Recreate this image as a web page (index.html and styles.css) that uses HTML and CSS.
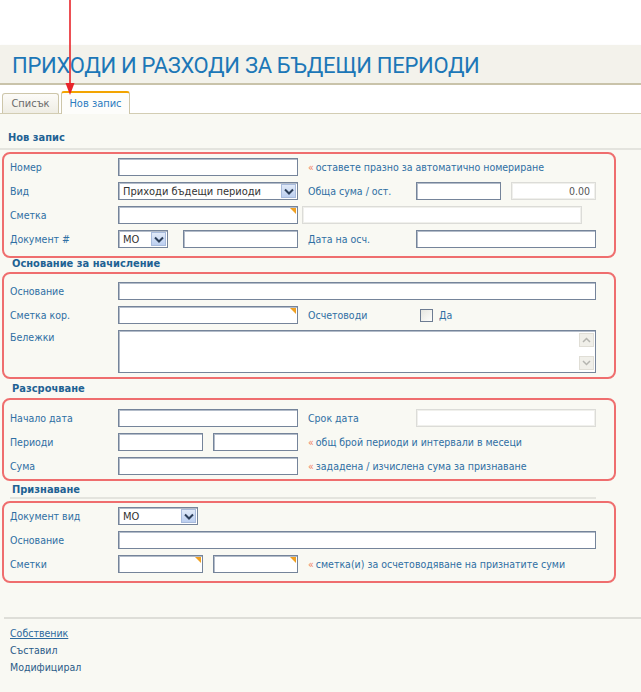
FILE: index.html
```html
<!DOCTYPE html>
<html lang="bg">
<head>
<meta charset="utf-8">
<title>Приходи и разходи за бъдещи периоди</title>
<link rel="stylesheet" href="styles.css">
</head>
<body>
<div class="page">
  <div class="topspace"></div>
  <header class="titlebar"><h1>ПРИХОДИ И РАЗХОДИ ЗА БЪДЕЩИ ПЕРИОДИ</h1></header>
  <nav class="tabs">
    <a class="tab">Списък</a>
    <a class="tab tab-active">Нов запис</a>
  </nav>
  <main class="content">
    <h2 class="sec sec-first">Нов запис</h2>
    <div class="box box-1">
      <div class="grid">
        <span class="lbl c1">Номер</span>
        <div class="inp c2"></div>
        <div class="hint c4-8"><span class="raq">«</span>оставете празно за автоматично номериране</div>

        <span class="lbl c1">Вид</span>
        <div class="inp sel c2"><span>Приходи бъдещи периоди</span><span class="sel-btn"><svg width="10" height="7" viewBox="0 0 10 7"><path d="M1 1.5 L5 5.5 L9 1.5" fill="none" stroke="#2c3f5a" stroke-width="2"/></svg></span></div>
        <span class="lbl c4">Обща сума / ост.</span>
        <div class="inp c5"></div>
        <div class="inp ro num c7">0.00</div>

        <span class="lbl c1">Сметка</span>
        <div class="inp corner c2"></div>
        <div class="inp ro wide c3-8"></div>

        <span class="lbl c1">Документ #</span>
        <div class="pair c2">
          <div class="inp sel sel-doc"><span>МО</span><span class="sel-btn"><svg width="10" height="7" viewBox="0 0 10 7"><path d="M1 1.5 L5 5.5 L9 1.5" fill="none" stroke="#2c3f5a" stroke-width="2"/></svg></span></div>
          <div class="inp inp-doc"></div>
        </div>
        <span class="lbl c4">Дата на осч.</span>
        <div class="inp c5-8"></div>
      </div>
    </div>

    <h2 class="sec sec-2">Основание за начисление</h2>
    <div class="box box-2">
      <div class="grid">
        <span class="lbl c1">Основание</span>
        <div class="inp c2-8"></div>

        <span class="lbl c1">Сметка кор.</span>
        <div class="inp corner c2"></div>
        <span class="lbl c4">Осчетоводи</span>
        <div class="check c5-8"><span class="chk"></span><span class="lbl">Да</span></div>

        <span class="lbl c1 lbl-top">Бележки</span>
        <div class="inp area c2-8">
          <div class="scroll">
            <span class="sbtn"><svg width="9" height="6" viewBox="0 0 9 6"><path d="M1 5 L4.5 1.5 L8 5" fill="none" stroke="#b5b5b0" stroke-width="1.5"/></svg></span>
            <span class="sbtn"><svg width="9" height="6" viewBox="0 0 9 6"><path d="M1 1 L4.5 4.5 L8 1" fill="none" stroke="#b5b5b0" stroke-width="1.5"/></svg></span>
          </div>
        </div>
      </div>
    </div>

    <h2 class="sec sec-3">Разсрочване</h2>
    <div class="box box-3">
      <div class="grid">
        <span class="lbl c1">Начало дата</span>
        <div class="inp c2"></div>
        <span class="lbl c4">Срок дата</span>
        <div class="inp ro c5-8"></div>

        <span class="lbl c1">Периоди</span>
        <div class="pair c2">
          <div class="inp half"></div>
          <div class="inp half"></div>
        </div>
        <div class="hint c4-8"><span class="raq">«</span>общ брой периоди и интервали в месеци</div>

        <span class="lbl c1">Сума</span>
        <div class="inp c2"></div>
        <div class="hint c4-8"><span class="raq">«</span>зададена / изчислена сума за признаване</div>
      </div>
    </div>

    <h2 class="sec sec-4">Признаване</h2>
    <div class="box box-4">
      <div class="grid">
        <span class="lbl c1">Документ вид</span>
        <div class="c2">
          <div class="inp sel sel-kind"><span>МО</span><span class="sel-btn"><svg width="10" height="7" viewBox="0 0 10 7"><path d="M1 1.5 L5 5.5 L9 1.5" fill="none" stroke="#2c3f5a" stroke-width="2"/></svg></span></div>
        </div>

        <span class="lbl c1">Основание</span>
        <div class="inp c2-8"></div>

        <span class="lbl c1">Сметки</span>
        <div class="pair c2">
          <div class="inp half corner"></div>
          <div class="inp half corner"></div>
        </div>
        <div class="hint c4-8"><span class="raq">«</span>сметка(и) за осчетоводяване на признатите суми</div>
      </div>
    </div>

    <footer class="footer">
      <a class="owner">Собственик</a>
      <div>Съставил</div>
      <div>Модифицирал</div>
    </footer>
  </main>

  <svg class="arrow" width="12" height="96" viewBox="0 0 12 96">
    <line x1="6" y1="0" x2="6" y2="85" stroke="#e8242a" stroke-width="1.6"/>
    <polygon points="1.5,83 10.5,83 6,95" fill="#e8242a"/>
  </svg>
</div>
</body>
</html>
```

FILE: styles.css
```css
html, body {
  margin: 0;
  background: #f9f9f3;
}
body {
  font-family: "DejaVu Sans Condensed", "DejaVu Sans", sans-serif;
  font-size: 10.5px;
  color: #2f6fa3;
}
.page {
  position: relative;
  min-height: 692px;
}
.topspace {
  height: 45px;
  background: #fff;
}
.titlebar {
  height: 38px;
  background: #f3f2eb;
  border-bottom: 2px solid #c9c3aa;
  box-shadow: 0 1px 2px rgba(0, 0, 0, 0.15);
  display: flex;
  align-items: center;
  padding-left: 12px;
}
.titlebar h1 {
  margin: 0;
  padding-top: 4px;
  font-family: Roboto, "Liberation Sans", sans-serif;
  font-weight: 400;
  font-size: 22px;
  letter-spacing: -0.3px;
  line-height: 1;
  color: #1c77b7;
}
.tabs {
  background: #fff;
  height: 28px;
  border-bottom: 1px solid #d3cdb3;
  display: flex;
  align-items: flex-end;
  padding-left: 2px;
  gap: 2px;
}
.tab {
  box-sizing: border-box;
  height: 20px;
  width: 57px;
  border: 1px solid #cdc6aa;
  border-bottom: 0;
  border-radius: 3px 3px 0 0;
  background: linear-gradient(#fcfbf8, #efede4);
  color: #6a6a6a;
  font-size: 11px;
  display: flex;
  align-items: center;
  justify-content: center;
}
.tab-active {
  width: 69px;
  height: 23px;
  margin-bottom: -1px;
  border-top: 2px solid #f2a400;
  background: #fdfdfb;
  color: #2b7bbf;
}
.content {
  padding-bottom: 10px;
}
.sec {
  margin: 0;
  font-size: 11px;
  font-weight: bold;
  line-height: 12px;
  color: #1f6293;
}
.sec-first {
  padding: 18px 0 4px 8px;
  border-bottom: 2px solid #e4e4de;
  margin-bottom: 2px;
}
.sec-2 {
  padding: 0 0 2px 12px;
}
.sec-3 {
  padding: 4px 0 3px 12px;
}
.sec-4 {
  padding: 3px 0 1px 2px;
  margin: 0 45px 2px 10px;
  border-bottom: 2px solid #e4e4de;
}
.box {
  margin: 0 25px 0 2px;
  border: 2px solid #ef6e6e;
  border-radius: 8px;
  padding-left: 6px;
}
.box-1 { padding-top: 4px; padding-bottom: 8px; }
.box-2 { padding-top: 8px; padding-bottom: 4px; }
.box-3 { padding-top: 9px; padding-bottom: 4px; }
.box-4 { padding-top: 4px; padding-bottom: 8px; }
.grid {
  display: grid;
  grid-template-columns: 108px 180px 10px 108px 85px 10px 85px;
  row-gap: 6px;
  align-items: center;
}
.lbl {
  white-space: nowrap;
}
.lbl-top {
  align-self: start;
  padding-top: 1px;
}
.c1 { grid-column: 1; }
.c2 { grid-column: 2; }
.c4 { grid-column: 4; }
.c5 { grid-column: 5; }
.c7 { grid-column: 7; }
.c2-8 { grid-column: 2 / 8; }
.c3-8 { grid-column: 3 / 8; }
.c4-8 { grid-column: 4 / 8; }
.c5-8 { grid-column: 5 / 8; }
.inp {
  position: relative;
  box-sizing: border-box;
  height: 18px;
  background: #fff;
  border: 1px solid #75849a;
  box-shadow: inset 1px 1px 0 #b3bcc9;
}
.ro {
  border-color: #dcdcd8;
  box-shadow: inset 0 0 0 1px #f0f0ec;
}
.num {
  text-align: right;
  padding-right: 5px;
  line-height: 16px;
  color: #555;
}
.wide {
  margin-left: 4px;
  width: 280px;
}
.corner::after {
  content: "";
  position: absolute;
  top: 1px;
  right: 1px;
  width: 0;
  height: 0;
  border-right: 6px solid #f0a020;
  border-bottom: 6px solid transparent;
}
.sel {
  display: flex;
  align-items: center;
  justify-content: space-between;
  padding: 0 1px 0 4px;
  color: #333;
  font-size: 11px;
}
.sel-btn {
  box-sizing: border-box;
  width: 15px;
  height: 14px;
  border: 1px solid #a8bbdc;
  background: linear-gradient(#e1eaf8, #bccff0);
  display: flex;
  align-items: center;
  justify-content: center;
}
.sel-doc { width: 50px; }
.sel-kind { width: 80px; }
.inp-doc { width: 115px; }
.pair {
  display: flex;
  justify-content: space-between;
}
.half { width: 85px; }
.hint {
  white-space: nowrap;
}
.raq {
  color: #f0805c;
  margin-right: 2px;
}
.check {
  display: flex;
  align-items: center;
  padding-left: 4px;
  gap: 6px;
}
.chk {
  box-sizing: border-box;
  width: 13px;
  height: 13px;
  border: 1px solid #6d7c92;
  background: linear-gradient(135deg, #e6e6e0, #fdfdfb);
}
.area {
  height: 43px;
  display: flex;
  justify-content: flex-end;
}
.scroll {
  display: flex;
  flex-direction: column;
  justify-content: space-between;
  padding: 2px 1px 2px 0;
}
.sbtn {
  box-sizing: border-box;
  width: 15px;
  height: 14px;
  background: #f0efe9;
  border: 1px solid #e0ded6;
  display: flex;
  align-items: center;
  justify-content: center;
}
.footer {
  margin: 34px 0 0 4px;
  border-top: 2px solid #deded8;
  padding: 6px 0 0 6px;
  line-height: 17px;
  color: #2b5b88;
}
.owner {
  color: #2d6a9e;
  text-decoration: underline;
}
.arrow {
  position: absolute;
  left: 64px;
  top: 0;
}
```
